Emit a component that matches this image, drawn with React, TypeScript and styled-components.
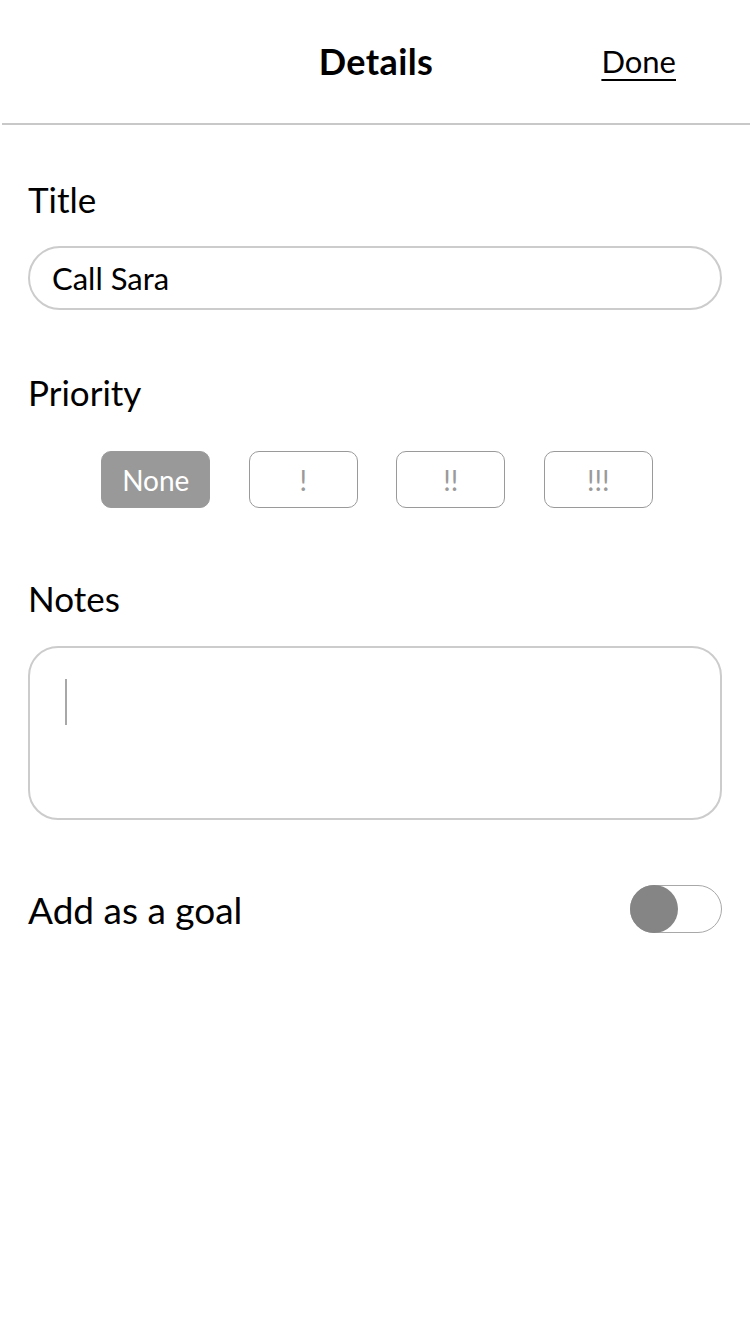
import React, { FC } from "react";
import styled, { createGlobalStyle } from "styled-components";

const GlobalStyle = createGlobalStyle`
  html, body {
    margin: 0;
    padding: 0;
    background: #fff;
  }
  body {
    font-family: "Lato", "Open Sans", sans-serif;
    color: #000;
  }
`;

const Page = styled.div`
  width: 750px;
  min-height: 1334px;
  background: #fff;
`;

const Header = styled.header`
  height: 123px;
  margin-left: 2px;
  border-bottom: 2px solid #c8c8c8;
  display: grid;
  grid-template-columns: 1fr auto 1fr;
  align-items: center;
`;

const HeaderTitle = styled.h1`
  grid-column: 2;
  margin: 0 0 2px;
  font-size: 36px;
  font-weight: 700;
  letter-spacing: 0.4px;
`;

const DoneLink = styled.a`
  justify-self: end;
  margin-right: 74px;
  margin-bottom: 2px;
  font-size: 31px;
  color: #000;
  text-decoration: underline;
  text-underline-offset: 6px;
  text-decoration-thickness: 2px;
`;

const Content = styled.main`
  padding: 0 28px;
  display: flex;
  flex-direction: column;
`;

const Label = styled.div<{ $top: number }>`
  margin-top: ${(p) => p.$top}px;
  font-size: 35px;
  line-height: 40px;
`;

const TitleInput = styled.div`
  margin-top: 27px;
  height: 60px;
  border: 2px solid #cccccc;
  border-radius: 32px;
  display: flex;
  align-items: center;
  padding-left: 22px;
  font-size: 31px;
`;

const PriorityRow = styled.div`
  margin-top: 39px;
  display: flex;
  justify-content: center;
  gap: 38.5px;
  padding-left: 4px;
`;

const PriorityButton = styled.button<{ $active?: boolean }>`
  width: 109px;
  height: 57px;
  box-sizing: border-box;
  border-radius: 10px;
  border: 1.5px solid #9a9a9a;
  background: ${(p) => (p.$active ? "#999999" : "#fff")};
  color: ${(p) => (p.$active ? "#fff" : "#9a9a9a")};
  font-family: inherit;
  font-size: 28px;
  padding: 0;
`;

const NotesBox = styled.div`
  margin-top: 28px;
  height: 174px;
  border: 2px solid #cccccc;
  border-radius: 30px;
  padding: 31px 0 0 35px;
  box-sizing: border-box;
`;

const Caret = styled.div`
  width: 1.5px;
  height: 46px;
  background: #a8a8a8;
`;

const GoalRow = styled.div`
  margin-top: 65px;
  display: flex;
  align-items: center;
  justify-content: space-between;
`;

const GoalLabel = styled.div`
  font-size: 37px;
`;

const Toggle = styled.div`
  width: 92px;
  height: 48px;
  box-sizing: border-box;
  border: 1.5px solid #a8a8a8;
  border-radius: 24px;
  position: relative;
`;

const Knob = styled.div`
  position: absolute;
  left: -1.5px;
  top: -1.5px;
  width: 48px;
  height: 48px;
  border-radius: 50%;
  background: #858585;
`;

const priorities = ["None", "!", "!!", "!!!"];

const App: FC = () => (
  <Page>
    <GlobalStyle />
    <Header>
      <HeaderTitle>Details</HeaderTitle>
      <DoneLink>Done</DoneLink>
    </Header>
    <Content>
      <Label $top={54}>Title</Label>
      <TitleInput>Call Sara</TitleInput>
      <Label $top={62}>Priority</Label>
      <PriorityRow>
        {priorities.map((p, i) => (
          <PriorityButton key={p} $active={i === 0}>
            {p}
          </PriorityButton>
        ))}
      </PriorityRow>
      <Label $top={70}>Notes</Label>
      <NotesBox>
        <Caret />
      </NotesBox>
      <GoalRow>
        <GoalLabel>Add as a goal</GoalLabel>
        <Toggle>
          <Knob />
        </Toggle>
      </GoalRow>
    </Content>
  </Page>
);

export default App;
